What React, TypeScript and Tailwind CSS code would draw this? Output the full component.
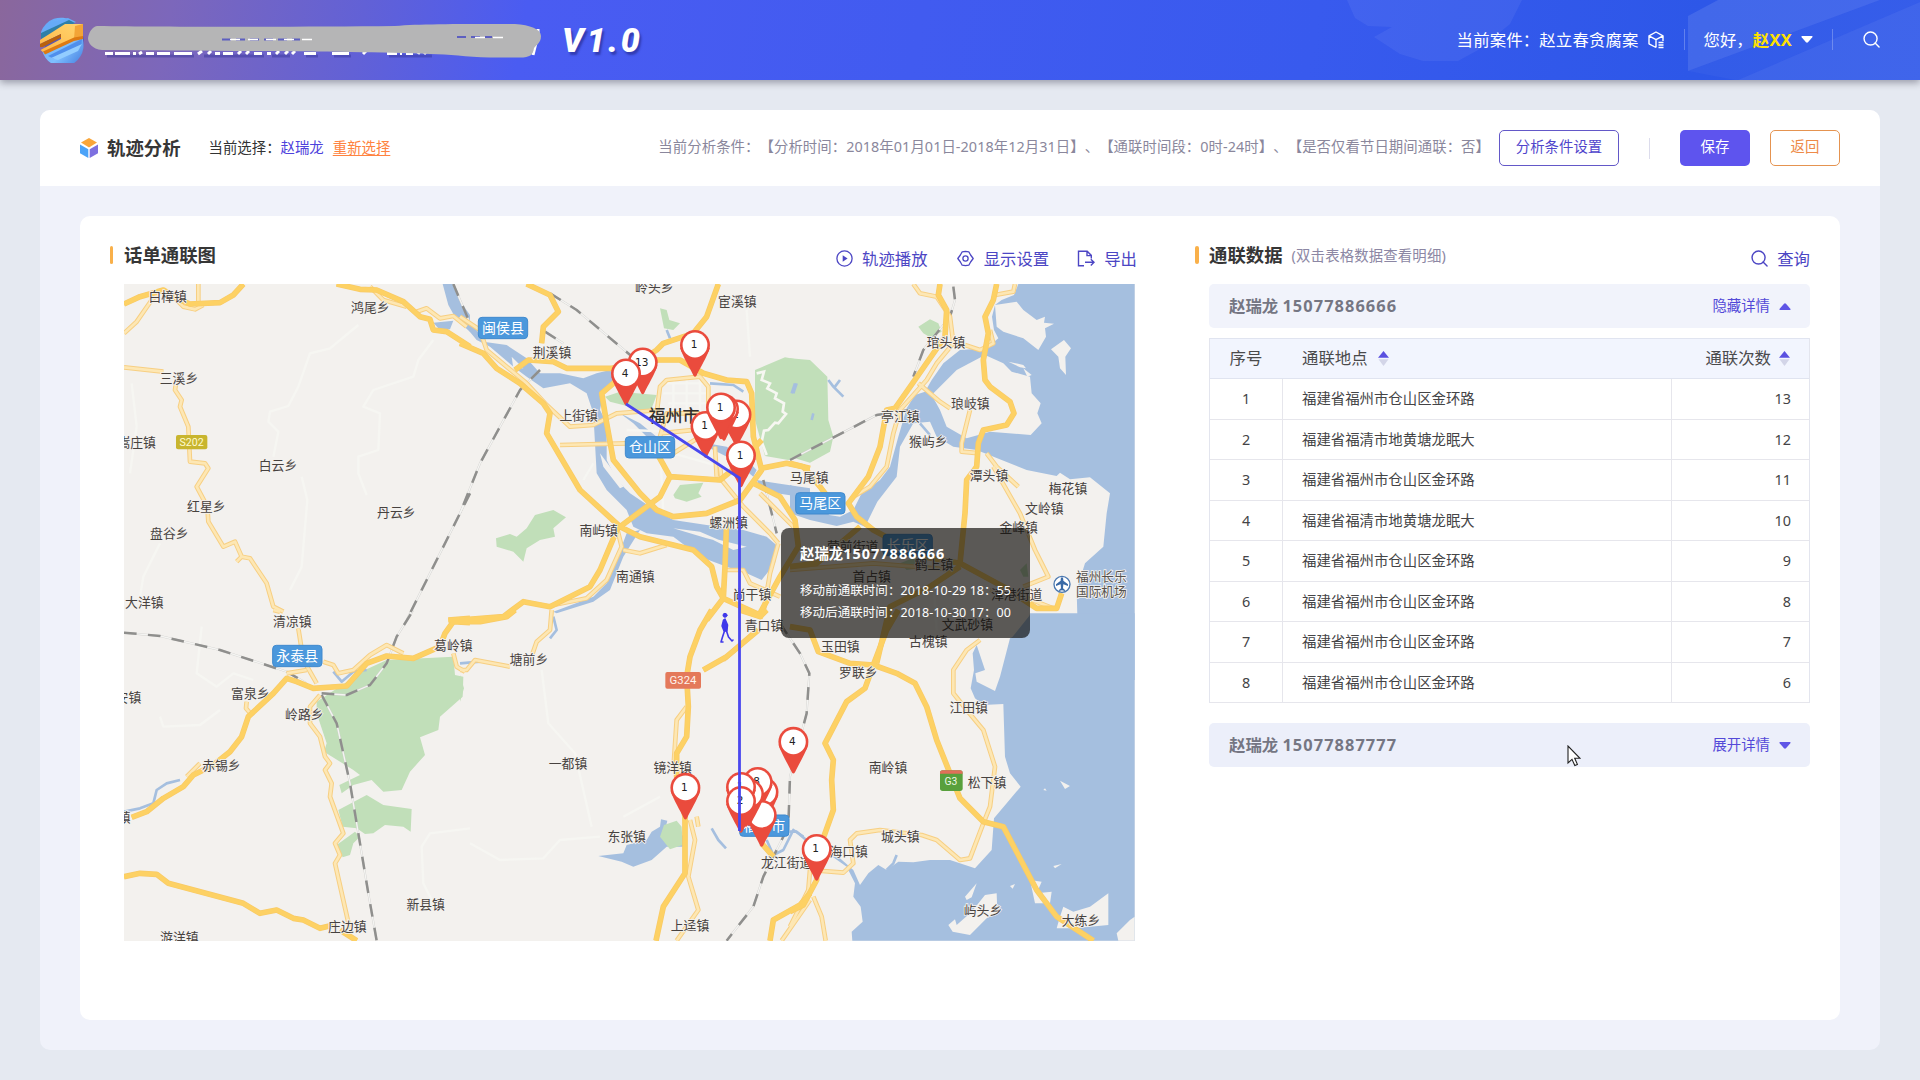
import React from "react";

type TileId = "A" | "B" | "C" | "D" | "E" | "F";

const TILE_ORIGIN: Record<TileId, string> = {
  A: "translate(120 280) scale(0.33333)",
  B: "translate(460 280) scale(0.33333)",
  C: "translate(790 280) scale(0.33333)",
  D: "translate(120 610) scale(0.33333)",
  E: "translate(460 610) scale(0.33333)",
  F: "translate(790 610) scale(0.33333)",
};

type Shape = [TileId, string];

const SEA: Shape[] = [
  ["C", "M685 12L672 45L635 60L615 75L606 110L612 150L625 175L590 205L510 210L460 250L425 300L405 335L375 345L350 385L325 470L300 560L270 600L215 640L190 690L150 710L118 705L60 640L0 615L0 700L60 720L140 738L190 725L225 740L262 665L320 590L330 500L370 430L420 425L440 470L490 500L560 510L635 540L710 570L800 588L810 578L840 598L900 592L960 640L950 700L940 800L885 850L860 930L862 1005L720 1005L660 1080L700 1200L1034 1200L1034 12Z"],
  ["F", "M720 10L710 60L660 85L630 200L615 243L560 215L556 190L585 180L560 105L548 130L552 180L542 235L555 265L580 285L640 282L645 440L660 490L692 530L650 580L612 625L605 720L555 775L480 750L420 750L370 757L325 755L290 780L265 765L235 790L210 825L190 780L150 745L120 735L170 770L195 820L190 860L212 890L218 935L185 965L187 992L1034 992L1034 10Z"],
  ["B", "M0 80L50 150L70 185L140 195L200 235L240 280L300 280L370 295L410 280L450 270L470 300L430 340L420 390L440 430L440 540L470 600L510 640L570 680L640 720L740 735L850 750L920 770L955 800L945 850L905 900L860 880L800 860L720 830L640 770L560 760L520 740L500 690L440 630L410 580L400 400L380 340L330 310L250 325L200 290L160 260L90 200L50 180L0 120Z"],
  ["B", "M480 400L540 430L590 470L600 490L570 480L520 430ZM890 600L950 610L1050 625L1050 655L950 640L900 620ZM500 760L540 750L490 830L450 930L400 965L290 1000L280 995L400 950L440 910L470 840ZM740 490L800 500L860 540L890 570L880 590L820 540L750 505Z"],
  ["A", "M968 12L1000 12L1018 60L1050 105L1050 155L1010 120L985 75ZM940 128L1000 122L990 148L960 150Z"],
  ["E", "M415 738L490 730L500 705L560 690L575 665L600 650L603 628L622 632L615 660L680 680L668 710L620 710L575 750L520 770L485 755Z"],
];

const LAND: Shape[] = [
  ["C", "M425 345L500 270L585 225L640 250L665 275L720 290L725 340L752 370L742 400L755 430L722 465L600 455L530 475L470 440L450 390Z"],
  ["C", "M615 75L680 65L700 90L740 120L765 110L762 128L792 131L765 145L768 170L745 210L700 175L640 155L620 140Z"],
  ["C", "M783 208L822 180L843 205L826 230L828 285L810 265L805 230ZM655 245L700 255L708 265L690 262ZM700 265L725 285L712 290Z"],
  ["F", "M475 945L495 928L500 945L545 905L585 855L620 850L622 905L590 925L540 975L488 965ZM560 820L525 860L530 870L545 862ZM810 512L840 528L825 537ZM765 535L770 542L760 540ZM790 768L815 762L795 775ZM660 828L675 822L668 836ZM720 810L755 815L740 850L785 845L780 880L735 880ZM820 890L850 905L900 890L955 850L955 945L900 950L850 955L800 955L810 920ZM1034 920L1020 930L980 970L985 992L1034 992Z"],
  ["B", "M420 520L450 560L490 620L480 625L430 560ZM740 770L860 800L820 810ZM640 745L720 755L800 790L740 775ZM155 230L190 265L160 265Z"],
];

const GREEN: Shape[] = [
  ["B", "M885 270L975 232L1050 245L1050 520L985 540L915 528L885 420Z"],
  ["C", "M0 235L60 240L112 290L115 420L130 470L120 515L60 548L0 530ZM385 140L420 118L445 130L455 155L420 172L400 160Z"],
  ["B", "M108 775L150 762L170 770L200 745L225 705L280 690L318 712L280 745L285 770L240 780L200 805L190 845L160 815L110 800ZM640 645L660 615L730 608L715 640L725 650L680 665L645 655ZM600 85L620 90L628 120L660 130L640 150L612 145ZM435 350L480 335L590 345L575 385L530 395L510 380L450 365Z"],
  ["D", "M590 275L735 180L800 150L1000 140L1005 195L1030 200L1028 260L960 320L955 360L900 382L915 435L870 485L845 540L790 545L755 510L700 525L665 550L658 525L720 495L700 480L612 425L620 400L590 310ZM655 600L740 555L790 585L875 597L872 665L850 650L795 645L760 670L735 672L710 655L668 650ZM650 705L705 665L720 680L700 700L690 735L668 742Z"],
  ["E", "M0 195L12 235L0 275ZM600 680L612 645L650 632L665 650L668 705L630 718Z"],
  ["C", "M690 870L710 850L715 890L700 890ZM330 850L380 830L420 860L350 870Z"],
];

const MINOR_ROADS: Shape[] = [
  ["A", "M715 135L630 205L570 220L535 320L505 378L450 395L445 425L475 455L460 530M545 590L562 660L545 860L510 930M940 180L895 240L880 290L760 330L730 380L780 400L775 510L715 530L715 580L740 645M35 310L50 440L30 580M120 790L70 890L60 950"],
  ["D", "M245 50L230 190L290 230L340 190L400 210M1050 655L930 670L905 710L910 820L940 880M120 320L130 350L240 345L300 300"],
  ["E", "M245 180L265 340L345 430L395 650M30 700L120 750L250 745L300 690L420 680M490 620L600 560"],
  ["C", "M200 850L230 900M430 900L440 1050"],
  ["B", "M620 310L750 310M610 340L745 340M625 370L740 370M640 300L640 400M680 290L680 420M720 300L720 400M600 500L610 700M400 550L370 600M500 450L780 460M640 520L780 560M860 90L870 230"],
];

const YELLOW_THIN: Shape[] = [
  ["A", "M12 160L50 125L95 60L110 45M235 12L235 70M160 50L190 80L225 88L250 75M12 262L130 275M168 310L165 330L185 360L180 380L205 440L210 545L255 550L265 565L230 620L262 680L265 725L310 800L345 785L365 830L350 845M365 830L390 835L440 910L460 980L490 995M890 95L920 85L960 115L1000 108L1040 140M750 20L790 60L860 80"],
  ["D", "M460 0L480 5M535 55L550 150L590 220M600 255L570 290L570 340L600 380L615 440L630 460L615 480L635 520L630 560L670 670L645 700L660 735L645 760L690 960M610 155L640 165L655 190L700 180L750 135L800 105L850 130M380 275L378 295L395 315M200 500L240 460M1000 130L1010 170L1035 185M500 190L560 180"],
  ["E", "M275 0L270 60L230 95L218 130M0 180L20 180L45 150L125 165L150 170M680 290L650 330L640 480M690 630L705 690L685 800L715 900L650 992M1050 870L965 992M710 620L715 650M890 60L790 150"],
  ["B", "M0 110L60 150L80 210L200 310L260 375L330 440L400 435L470 400L600 390M300 495L500 490M590 400L600 320L620 300L720 290L745 320L745 370L770 420M600 460L800 440M470 740L485 800L440 900L380 955L280 975M490 810L540 820L620 795M780 560L785 600L850 680L930 760L955 790M900 640L1000 740M955 790L930 880L910 1000M800 870L850 870L870 910L960 950M640 520L720 470L720 420M600 470L620 400L720 400M765 500L770 590"],
  ["C", "M370 12L390 40L440 50L480 110L490 190L440 250L410 300L330 390L310 460L290 560L240 620L190 650M385 310L450 365L480 385M525 195L570 210L610 190L600 150M675 12L670 35L615 45M540 390L515 490L515 515L570 520M590 520L620 560L685 620M610 560L690 700L735 810L775 890L700 920M0 870L250 850L500 870M600 930L700 950L790 985"],
  ["F", "M570 90L530 120L490 180L490 250L530 300L580 360L615 470L600 590L580 640L540 745L510 750L440 690L395 675L270 660L200 670L180 690L190 760L160 788L60 780L55 840L0 950M70 860L95 920L107 992"],
];

const YELLOW_MAIN: Shape[] = [
  ["A", "M12 72L60 50L130 30L170 55L210 72L300 68L340 45L370 12M650 12L720 28L770 30L850 65L900 110L930 118L940 150L980 155L1050 200M985 1020L1050 1015"],
  ["B", "M0 190L70 220L110 265L180 310L250 370L270 400L260 460L360 630L480 740L540 770L640 795L700 810L755 860L770 920L790 955L910 1010M200 12L270 45L295 95L250 140L245 190M165 270L205 240L280 245L320 265L455 265L580 240L660 240L730 280L800 300L860 305L875 340L880 470L905 570L840 660L740 700L640 710L590 690L540 640L460 540L440 430L425 340L460 310L500 270L590 210L610 190L700 160L740 110L775 12M480 740L600 650L630 590L780 600L830 560L905 480M630 590L580 500M475 740L420 870L390 920L270 980L190 965L130 1010L0 1020M905 565L980 550L1050 565M880 610L960 650L1005 720L1015 800L960 890L900 1000M800 720L795 860L790 955L740 1020"],
  ["C", "M450 12L445 45L470 90L465 170L385 285L315 385L290 390L270 500L235 590L175 670L200 710L250 750L400 830L510 850L640 920L740 985L800 985L815 940M620 12L610 60L585 110L595 160L580 240L585 300L600 320L660 365L672 400L650 435L580 450L565 490L560 560L530 600L525 700L510 850M0 550L40 560L90 620L120 660M0 860L80 850L210 740M510 860L420 920L300 980L260 1150"],
  ["D", "M35 622L80 605L130 565L190 530L220 495L280 465L330 425L365 380L385 320L460 250L500 205L530 215L580 235L680 228L740 160L800 138L880 145L960 110L975 70L1000 35L1050 38M12 800L60 790L110 793L145 820L370 880L420 910L470 900L520 925L550 930L600 955L640 945M660 960L710 992"],
  ["E", "M0 35L60 35L140 20L165 0M755 0L720 60L690 140L680 200L685 290L680 380L650 430L650 500L675 620L675 790L610 890L588 992M840 0L900 20L920 0M895 60L800 140L730 180M1050 850L1020 885L940 930L930 992M905 700L940 740"],
  ["F", "M0 50L60 60L85 125L180 160L250 165L320 190L375 220L410 290L440 390L480 490L510 565L580 635L640 650L740 840L800 920L910 992M325 0L290 60L250 165L225 235L170 275L105 400L130 450L125 510L130 600L80 740L80 810L40 885L0 905"],
];

const RAIL: Shape[] = [
  ["A", "M1050 640L860 1020M1000 12L1050 130"],
  ["B", "M240 270L180 330L60 550L0 700M270 40L350 90L540 250M255 155L310 190M910 600L950 760"],
  ["C", "M490 20L495 60L480 110L400 210L370 290M0 540L260 405L360 390"],
  ["D", "M12 68L120 78L300 120L500 185L560 220M605 250L680 255L750 225L800 160L830 80L880 0M605 255L650 340L690 520L745 850L770 992"],
  ["E", "M960 40L1020 130L1048 190L1040 310L990 500L985 650L910 800L880 890L800 992"],
];

const STREAMS: Shape[] = [
  ["D", "M12 605L60 595L100 580L110 540L140 520L180 510M640 185L665 215L700 185L740 180"],
  ["E", "M270 85L290 60L280 20M920 690L940 735L970 720L1000 660L1030 680M755 655L775 690L798 715M0 160L60 155"],
  ["F", "M0 665L20 665L60 700M290 780L310 760L320 735"],
  ["C", "M115 300L130 320L160 350M150 300L135 320M20 310L10 340M70 400L65 420M390 430L420 465"],
  ["B", "M620 150L630 175M750 310L820 315L850 335M1005 310L995 340"],
];

const LABELS: [TileId, string, number, number][] = [
  ["A", "白樟镇", 143, 48], ["A", "鸿尾乡", 751, 83], ["A", "三溪乡", 177, 295],
  ["A", "嵩庄镇", 50, 488], ["A", "白云乡", 474, 557], ["A", "红星乡", 259, 678],
  ["A", "丹云乡", 829, 696], ["A", "盘谷乡", 148, 760], ["A", "大洋镇", 73, 967],
  ["B", "岭头乡", 583, 22], ["B", "宦溪镇", 832, 64], ["B", "荆溪镇", 276, 217],
  ["B", "上街镇", 356, 406], ["B", "南屿镇", 416, 750], ["B", "螺洲镇", 806, 727],
  ["B", "南通镇", 526, 888], ["B", "尚干镇", 876, 944],
  ["C", "琯头镇", 468, 188], ["C", "琅岐镇", 541, 371], ["C", "亭江镇", 331, 409],
  ["C", "猴屿乡", 415, 485], ["C", "马尾镇", 58, 592], ["C", "潭头镇", 597, 586],
  ["C", "梅花镇", 834, 626], ["C", "文岭镇", 763, 685], ["C", "金峰镇", 686, 742],
  ["C", "营前街道", 188, 798], ["C", "鹤上镇", 432, 852], ["C", "首占镇", 245, 888],
  ["C", "漳港街道", 680, 944],
  ["D", "清凉镇", 517, 33], ["D", "葛岭镇", 1000, 107], ["D", "富泉乡", 391, 249],
  ["D", "长安镇", 6, 262], ["D", "岭路乡", 553, 314], ["D", "赤锡乡", 304, 466],
  ["D", "嵩口镇", -26, 622], ["D", "新县镇", 917, 884], ["D", "庄边镇", 682, 950],
  ["D", "游洋镇", 178, 982],
  ["E", "青口镇", 912, 46], ["E", "塘前乡", 207, 149], ["E", "一都镇", 324, 461],
  ["E", "镜洋镇", 638, 472], ["E", "东张镇", 500, 680], ["E", "龙江街道", 980, 757],
  ["E", "上迳镇", 690, 945],
  ["F", "文武砂镇", 532, 44], ["F", "古槐镇", 415, 94], ["F", "玉田镇", 151, 109],
  ["F", "罗联乡", 205, 188], ["F", "江田镇", 536, 292], ["F", "南岭镇", 294, 472],
  ["F", "松下镇", 591, 517], ["F", "城头镇", 331, 678], ["F", "海口镇", 176, 725],
  ["F", "屿头乡", 579, 901], ["F", "大练乡", 873, 932],
];

const BADGES: [TileId, string, number, number][] = [
  ["B", "闽侯县", 129, 144],
  ["B", "仓山区", 570, 502],
  ["C", "马尾区", 91, 670],
  ["C", "长乐区", 353, 795],
  ["D", "永泰县", 532, 138],
  ["E", "福清市", 913, 647],
];

const PINS: [number, number, string][] = [
  [695, 345, "1"],
  [642.7, 362.5, "13"],
  [626, 373.5, "4"],
  [736.5, 414.5, "2"],
  [705.5, 426, "1"],
  [724, 409, ""],
  [721, 407.5, "1"],
  [741, 455.5, "1"],
  [793.4, 741.8, "4"],
  [685.4, 787.8, "1"],
  [763.5, 792, ""],
  [757.7, 782, "8"],
  [746, 795, ""],
  [761.7, 815, ""],
  [749, 794, ""],
  [741, 787, "1"],
  [741, 801, "2"],
  [816.7, 849, "1"],
];

const CJK = '"Noto Sans","Noto Sans CJK SC",sans-serif';

function Strokes({ shapes, color, width, dash }: { shapes: Shape[]; color: string; width: number; dash?: string }) {
  return (
    <g fill="none" stroke={color} strokeWidth={width} strokeLinejoin="round" strokeDasharray={dash}>
      {shapes.map(([t, d], i) => (
        <path key={i} transform={TILE_ORIGIN[t]} d={d} />
      ))}
    </g>
  );
}

function Areas({ shapes, color }: { shapes: Shape[]; color: string }) {
  return (
    <g fill={color}>
      {shapes.map(([t, d], i) => (
        <path key={i} transform={TILE_ORIGIN[t]} d={d} />
      ))}
    </g>
  );
}

function Pin({ x, y, n }: { x: number; y: number; n: string }) {
  return (
    <g transform={`translate(${x} ${y})`}>
      <path d="M-14.8 3C-12 12 -5 23 -1.6 30.5Q0 33 1.6 30.5C5 23 12 12 14.8 3Z" fill="#ea4b3d" />
      <circle r="15" fill="#ea4b3d" />
      <circle r="12.4" fill="#fff" />
      <text x="-1" y="3" textAnchor="middle" fontSize="10.5" fill="#222" fontFamily='"DejaVu Sans",sans-serif'>
        {n}
      </text>
    </g>
  );
}

function CallMap() {
  return (
    <svg className="block h-full w-full" viewBox="124 284 1011 657">
      <rect x="124" y="284" width="1011" height="657" fill="#f3f1ee" />
      <Areas shapes={SEA} color="#a5bfdf" />
      <Areas shapes={LAND} color="#f3f1ee" />
      <Areas shapes={GREEN} color="#c1dfb9" />
      <Strokes shapes={MINOR_ROADS} color="#f6f6f2" width={7} />
      <Strokes shapes={STREAMS} color="#a5bfdf" width={8} />
      <path
        transform={TILE_ORIGIN.B}
        d="M890 280L912 275L905 300L930 310L922 325L950 340L945 355L972 370L968 395L978 402L955 430L945 428L925 450L912 452L905 485L920 525"
        fill="none"
        stroke="#f7f7f2"
        strokeWidth="8"
      />
      <Strokes shapes={RAIL} color="#cfcecb" width={6} />
      <Strokes shapes={RAIL} color="#f4f4f2" width={4} />
      <Strokes shapes={RAIL} color="#8f8f8d" width={7.5} dash="38 34" />
      <Strokes shapes={YELLOW_THIN} color="#f7cf82" width={14} />
      <Strokes shapes={YELLOW_THIN} color="#fde7b4" width={8} />
      <Strokes shapes={YELLOW_MAIN} color="#f8ca66" width={17} />
      <Strokes shapes={YELLOW_MAIN} color="#fdd164" width={13} />

      {LABELS.map(([t, s, x, y], i) => (
        <text
          key={i}
          transform={TILE_ORIGIN[t]}
          x={x}
          y={y + 14}
          textAnchor="middle"
          fontSize="38.5"
          fill="#47423f"
          stroke="#f3f1ee"
          strokeWidth="5"
          paintOrder="stroke"
          fontFamily={CJK}
        >
          {s}
        </text>
      ))}
      <text x="674" y="422" textAnchor="middle" fontSize="17" fontWeight="500" fill="#33302e" fontFamily={CJK}>
        福州市
      </text>

      {BADGES.map(([t, s, x, y], i) => (
        <g key={i} transform={TILE_ORIGIN[t]}>
          <rect x={x - 74} y={y - 32} width="148" height="64" rx="11" fill="#4b98dc" stroke="#3f8ace" strokeWidth="3" />
          <text x={x} y={y + 15} textAnchor="middle" fontSize="42" fill="#fff" fontFamily={CJK}>
            {s}
          </text>
        </g>
      ))}
      <g transform={TILE_ORIGIN.A}>
        <rect x="168" y="465" width="94" height="43" rx="6" fill="#c8b52e" />
        <text x="215" y="498" textAnchor="middle" fontSize="32" fill="#fffbd0" fontFamily="Roboto,sans-serif">S202</text>
      </g>
      <g transform={TILE_ORIGIN.E}>
        <rect x="616" y="186" width="107" height="50" rx="6" fill="#e4795a" />
        <text x="669" y="223" textAnchor="middle" fontSize="34" fill="#fff3ec" fontFamily="Roboto,sans-serif">G324</text>
      </g>
      <g transform={TILE_ORIGIN.F}>
        <rect x="450" y="481" width="68" height="62" rx="8" fill="#58a03c" />
        <path d="M450 491V489a8 8 0 0 1 8-8h52a8 8 0 0 1 8 8v2Z" fill="#e0705a" />
        <text x="483" y="526" textAnchor="middle" fontSize="31" fill="#eef8e4" fontFamily="Roboto,sans-serif">G3</text>
      </g>
      <g transform={TILE_ORIGIN.C}>
        <circle cx="816" cy="913" r="24" fill="#fff" stroke="#4a78b0" strokeWidth="4" />
        <path d="M816 892q4 0 4 10l14 11v5l-14-5-1 12 6 5v3l-9-2-9 2v-3l6-5-1-12-14 5v-5l14-11q0-10 4-10Z" fill="#3a6aa6" />
        <g fontSize="38" fill="#55514d" stroke="#f3f1ee" strokeWidth="5" paintOrder="stroke" fontFamily={CJK}>
          <text x="858" y="903">福州长乐</text>
          <text x="858" y="947">国际机场</text>
        </g>
      </g>

      {PINS.map(([x, y, n], i) => (
        <Pin key={i} x={x} y={y} n={n} />
      ))}
      <path d="M626 404L739.5 478V831" fill="none" stroke="#4a47ee" strokeWidth="2.8" />
      <g fill="#3f38ea" stroke="#3f38ea" strokeLinecap="round" strokeLinejoin="round">
        <circle cx="725" cy="615.3" r="2" />
        <path d="M725 619L727.6 625L727 631L724 631L722 626L723.5 620Z" strokeWidth="1.4" />
        <path d="M724.5 631L722.5 637L721 642H723M726.5 631L728.5 637L732 641L733 640" fill="none" strokeWidth="1.6" />
      </g>
    </svg>
  );
}

function LogoIcon() {
  return (
    <svg className="h-[46px] w-[46px]" viewBox="0 0 46 46">
      <defs>
        <linearGradient id="lg-blue" x1="0" y1="0" x2="1" y2="1">
          <stop offset="0" stopColor="#5fa4f6" />
          <stop offset=".6" stopColor="#7fc0ff" />
          <stop offset="1" stopColor="#3f78dc" />
        </linearGradient>
        <linearGradient id="lg-gold" x1="0" y1="1" x2="1" y2="0">
          <stop offset="0" stopColor="#ffb648" />
          <stop offset="1" stopColor="#ffd56e" />
        </linearGradient>
      </defs>
      <ellipse cx="24" cy="24.5" rx="20" ry="20.5" fill="#3b4db4" opacity=".55" />
      <path d="M1 15A21 21.5 0 0 1 32 4L1 17ZM2 33A21 21.5 0 0 0 43 23V20Z" fill="url(#lg-blue)" />
      <path d="M8 6L28 1L36 5L2 22Z" fill="#66abf8" />
      <path d="M1 16L29 3L35 6L1 22Z" fill="#2f7fa8" />
      <path d="M8 39L42 22L41 30L14 42Z" fill="#4f8fec" />
      <path d="M11 41L42 27L38 34L18 43Z" fill="#93cdff" />
      <path d="M0 23L25 7H43V20L33 22L3 35L0.5 33L21 22V17L0 27Z" fill="url(#lg-gold)" />
      <path d="M35 9L43 7V20L34 22Z" fill="#f3a436" />
      <path d="M0 27L21 17V20.5L3 30L0 30Z" fill="#b9610c" />
      <path d="M3 34.5L34 20.5L43 19V22L34 24L5 37.5Z" fill="#dd7a12" />
    </svg>
  );
}

function CubeIcon() {
  return (
    <svg className="h-5 w-[18px]" viewBox="0 0 18 20">
      <path d="M9 0L17 4.6L9 9.4L1 4.6Z" fill="#f9a63a" />
      <path d="M0 6.4L8.3 11.2V20L0 15.3Z" fill="#4ba3f8" />
      <path d="M18 6.4L9.7 11.2V20L18 15.3Z" fill="#7d70e0" />
    </svg>
  );
}

function SearchIcon({ className }: { className: string }) {
  return (
    <svg className={className} viewBox="0 0 18 18" fill="none" stroke="currentColor" strokeWidth="1.5">
      <circle cx="8" cy="8" r="6.9" />
      <path d="M12.8 12.8L17 17" strokeLinecap="round" />
    </svg>
  );
}

function Sorter() {
  return (
    <svg className="h-[15px] w-[11px] shrink-0" viewBox="0 0 11 15">
      <path d="M5.5 0L11 6.8H0Z" fill="#5a50e0" />
      <path d="M5.5 15L10.5 8.2H0.5Z" fill="#d3d5e8" />
    </svg>
  );
}

function Header() {
  return (
    <header className="relative flex h-20 items-center bg-[linear-gradient(100deg,#8a679c_0px,#7c67bb_170px,#6261d6_360px,#4a5cf2_520px,#385aee_1300px,#2d57e8_1680px,#3058ea_1920px)] pl-10 pr-10 text-white shadow-[0_3px_7px_rgba(40,40,60,0.38)]">
      <svg className="absolute inset-0 h-20 w-full" viewBox="0 0 1920 80">
        <path d="M1347 0L1355 18L1368 26L1392 27L1374 37L1400 54L1423 61H1458L1478 50L1510 24L1522 0Z" fill="#fff" opacity=".06" />
        <path d="M1688 16L1718 0H1880L1688 71Z" fill="#fff" opacity=".1" />
        <path d="M1738 80L1920 2V80Z" fill="#fff" opacity=".08" />
        <path d="M1718 0H1920V2L1738 80H1735L1688 71L1880 0Z" fill="#fff" opacity=".03" />
      </svg>
      <div className="relative flex items-center">
        <LogoIcon />
        <svg className="ml-0.5 h-10 w-[454px]" viewBox="88 20 454 40">
          <g stroke="#2c2c90" strokeOpacity=".4" strokeWidth="3" fill="none">
            <path d="M107 56H194M204 56H264M272 56H290M306 56H318M334 56H351M389 56H432" />
          </g>
          <g stroke="#fff" strokeWidth="3" fill="none">
            <path d="M105 53.5H113M115 53.5H130M133 53.5H136M139 54L142 52M146 53.5H154M157 53.5H170M174 53.5H192M198 54L202 51M208 54L211 51M215 53.5H220M223 53.5H233M238 54L241 51M246 54L249 51M254 53.5H262M267 53.5H271M276 54L279 51M285 54L288 51M292 54L295 51M304 53.5H316M332 53.5H349M363 54L366 51M387 53.5H397M400 53.5H402M406 53.5H413M418 54L420 51M424 54L427 51M533 55L536 43M538 36V29" />
          </g>
          <path d="M97 26C170 27 300 27 395 26C420 24 450 24 515 24C530 25 541 29 541 36C541 43 536 45 534 48C533 55 530 57.5 520 57.5H490C465 57 450 54 430 54C350 51 200 51 102 50C92 49 88 43 88 38C89 32 92 27 97 26Z" fill="#b5b5b6" />
          <path d="M222 39.5H300M457 37H492" stroke="#5d5fc0" strokeWidth="2" strokeDasharray="9 5" />
          <path d="M230 39.5H312M475 37.5H508" stroke="#fff" strokeWidth="1.4" strokeDasharray="10 8" />
        </svg>
        <div className="ml-[20px] font-['Roboto'] text-[34px] font-black italic leading-none tracking-[2.6px] [text-shadow:2px_3px_2px_rgba(30,30,120,0.5)]">
          V1.0
        </div>
      </div>
      <div className="relative ml-auto flex items-center text-[16.4px]">
        <span className="tracking-[0.15px]">当前案件：赵立春贪腐案</span>
        <svg className="ml-[9px] h-[18px] w-4" viewBox="0 0 16 18" fill="none" stroke="currentColor" strokeWidth="1.4" strokeLinejoin="round">
          <path d="M8 16.5L1 12.8V4.8L8 1L15 4.8V10M1 4.8L8 8.6L15 4.8M8 8.6V16.5" />
          <path d="M10.5 11.5H15.5M10.5 14H15.5M10.5 16.5H15.5" strokeWidth="1.6" />
        </svg>
        <i className="ml-5 h-[21px] w-px bg-white/25" />
        <span className="ml-[19px]">您好，</span>
        <b className="tracking-[0.3px] text-[#ffe100]">赵XX</b>
        <svg className="ml-[9px] h-[7px] w-3" viewBox="0 0 12 7"><path d="M1 0H11Q12 .3 11.3 1.2L7 6.3Q6 7.2 5 6.3L.7 1.2Q0 .3 1 0Z" fill="#fff" /></svg>
        <i className="ml-[19px] h-[21px] w-px bg-white/25" />
        <SearchIcon className="ml-[30px] h-[17px] w-[17px]" />
      </div>
    </header>
  );
}

function PageBar() {
  return (
    <div className="flex h-[76px] items-center rounded-t-[10px] bg-white pl-10 pr-10 text-[14.4px]">
      <CubeIcon />
      <h1 className="ml-[9px] text-[18.4px] font-bold text-[#363636]">轨迹分析</h1>
      <span className="ml-7 text-[#333]">当前选择：</span>
      <span className="text-[#4e42dc]">赵瑞龙</span>
      <a className="ml-[9px] text-[#ff8340] underline underline-offset-2">重新选择</a>
      <span className="ml-auto -mt-0.5 whitespace-nowrap tracking-[0.06px] text-[#8a879c] [text-spacing-trim:space-all]">
        当前分析条件：【分析时间：2018年01月01日-2018年12月31日】、【通联时间段：0时-24时】、【是否仅看节日期间通联：否】
      </span>
      <button className="ml-[9px] h-9 w-[120px] shrink-0 rounded-[5px] border border-[#6358c8] pb-0.5 text-[#5046cc]">分析条件设置</button>
      <i className="ml-[30px] h-[21px] w-px bg-[#dcdcec]" />
      <button className="ml-[30px] h-9 w-[70px] shrink-0 rounded-[5px] bg-[#5e54ee] pb-0.5 text-white">保存</button>
      <button className="ml-5 h-9 w-[70px] shrink-0 rounded-[5px] border border-[#e59350] pb-0.5 text-[#ee8a48]">返回</button>
    </div>
  );
}

function MapPanel() {
  return (
    <section className="w-[1027px]">
      <div className="flex h-[68px] items-center pt-2.5">
        <i className="h-[18px] w-[3px] rounded-sm bg-[#f9b04a]" />
        <h2 className="ml-[11px] text-[18.4px] font-bold text-[#363636]">话单通联图</h2>
        <div className="ml-auto mt-2 flex items-center text-[16.4px] text-[#4c46c4]">
          <svg className="h-[17px] w-[17px]" viewBox="0 0 17 17" fill="none" stroke="currentColor" strokeWidth="1.3">
            <circle cx="8.5" cy="8.5" r="7.6" />
            <path d="M6.7 5.3L11.6 8.5L6.7 11.7Z" fill="currentColor" stroke="none" />
          </svg>
          <span className="ml-[9px]">轨迹播放</span>
          <svg className="ml-[29px] h-[17px] w-[17px]" viewBox="0 0 17 17" fill="none" stroke="currentColor" strokeWidth="1.3" strokeLinejoin="round">
            <path d="M5.2 1.8L8.5 1.3L11.8 1.8L13.6 5L16.2 8.5L13.6 12L11.8 15.2L8.5 15.7L5.2 15.2L3.4 12L.8 8.5L3.4 5Z" />
            <circle cx="8.5" cy="8.5" r="2.6" />
          </svg>
          <span className="ml-2.5">显示设置</span>
          <svg className="ml-7 h-[17px] w-[18px]" viewBox="0 0 18 17" fill="none" stroke="currentColor" strokeWidth="1.4">
            <path d="M7 15.8H1.5V1.2H10.2L14.3 5.4V8.5M10 1.2V5.6H14.3M8 12.2H17M13.8 9.2L17 12.2L13.8 15.4" />
          </svg>
          <span className="ml-[9px]">导出</span>
        </div>
      </div>
      <div className="relative ml-3.5 h-[657px] w-[1011px] overflow-hidden">
        <CallMap />
        <div className="absolute left-[657px] top-[244px] h-[110px] w-[249px] rounded-[8px] bg-[#0c0a08]/66 pl-[19px] pt-[15px] text-[12.5px] leading-[22px] text-white">
          <div className="mb-[15px] text-[14.4px] font-bold">
            赵瑞龙<span className="tracking-[1.05px]">15077886666</span>
          </div>
          <div className="whitespace-nowrap tracking-[0.06px]">移动前通联时间：2018-10-29 18：55</div>
          <div className="whitespace-nowrap tracking-[0.06px]">移动后通联时间：2018-10-30 17：00</div>
        </div>
      </div>
    </section>
  );
}

const ROWS: [string, number][] = [
  ["福建省福州市仓山区金环路", 13],
  ["福建省福清市地黄塘龙眠大", 12],
  ["福建省福州市仓山区金环路", 11],
  ["福建省福清市地黄塘龙眠大", 10],
  ["福建省福州市仓山区金环路", 9],
  ["福建省福州市仓山区金环路", 8],
  ["福建省福州市仓山区金环路", 7],
  ["福建省福州市仓山区金环路", 6],
];

function PersonBar({ phone, open }: { phone: string; open: boolean }) {
  return (
    <div className={`flex h-11 items-center rounded-[5px] pl-5 pr-[19px] ${open ? "bg-[#f1f3fb]" : "bg-[#eceffa]"}`}>
      <span className="text-[16.4px] font-bold text-[#757683]">
        赵瑞龙 <span className="tracking-[1.05px]">{phone}</span>
      </span>
      <span className="ml-auto text-[14.4px] text-[#5349d8]">{open ? "隐藏详情" : "展开详情"}</span>
      <svg className={`ml-[9px] h-[7px] w-3 ${open ? "rotate-180" : ""}`} viewBox="0 0 12 7">
        <path d="M1 0H11Q12 .3 11.3 1.2L7 6.3Q6 7.2 5 6.3L.7 1.2Q0 .3 1 0Z" fill="#5f55e6" />
      </svg>
    </div>
  );
}

function DataPanel() {
  return (
    <section className="ml-[58px] w-[615px]">
      <div className="flex h-[68px] items-center pt-2.5">
        <i className="h-[18px] w-1 rounded-sm bg-[#f9b04a]" />
        <h2 className="ml-2.5 text-[18.4px] font-bold text-[#363636]">通联数据</h2>
        <span className="ml-[9px] mt-0.5 text-[14.4px] tracking-[0.15px] text-[#8c87a4]">(双击表格数据查看明细)</span>
        <span className="ml-auto mt-2 flex items-center gap-[9px] text-[16.4px] text-[#4c46c4]">
          <SearchIcon className="h-[17px] w-[17px]" />
          查询
        </span>
      </div>
      <div className="ml-3.5 w-[601px]">
        <PersonBar phone="15077886666" open />
        <div className="mt-2.5 border-l border-r border-[#e3e5ee]">
          <div className="flex h-[41px] items-center border-b border-t border-[#e0e4f0] bg-[#f2f5fe] text-[16.4px] text-[#4a4a4c]">
            <span className="w-[72px] text-center">序号</span>
            <span className="ml-5 flex flex-1 items-center gap-2.5">通联地点 <Sorter /></span>
            <span className="mr-[19px] flex items-center gap-2">通联次数 <Sorter /></span>
          </div>
          {ROWS.map(([place, count], i) => (
            <div key={i} className="flex h-[40.5px] border-b border-[#e6e6ec] text-[14.4px] leading-[40px] text-[#444446]">
              <span className="w-[73px] border-r border-[#e6e6ec] text-center">{i + 1}</span>
              <span className="flex-1 pl-[19px]">{place}</span>
              <span className="w-[138px] border-l border-[#e6e6ec] pr-[18px] text-right">{count}</span>
            </div>
          ))}
        </div>
        <div className="mt-5">
          <PersonBar phone="15077887777" open={false} />
        </div>
      </div>
    </section>
  );
}

export default function App() {
  return (
    <div className="relative h-[1080px] w-[1920px] overflow-hidden bg-[#e5e9f1] font-['Noto_Sans','Noto_Sans_CJK_SC',sans-serif]">
      <Header />
      <main className="mx-10 mt-[30px] h-[940px] rounded-[10px] bg-[#f0f2fa]">
        <PageBar />
        <div className="mx-10 mt-[30px] flex h-[804px] rounded-[10px] bg-white pl-[30px]">
          <MapPanel />
          <DataPanel />
        </div>
      </main>
      <svg className="absolute left-[1567px] top-[745px] h-[22px] w-[14px]" viewBox="0 0 14 22">
        <path d="M1 1V18L5 14.3L7.8 20.5L10.4 19.4L7.7 13.3H13Z" fill="#fff" stroke="#222" strokeWidth="1.1" />
      </svg>
    </div>
  );
}
